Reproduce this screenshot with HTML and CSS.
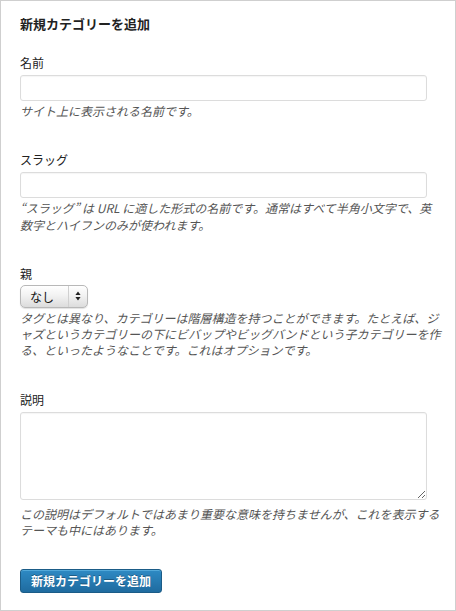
FILE: index.html
```html
<!DOCTYPE html>
<html lang="ja">
<head>
<meta charset="utf-8">
<title>新規カテゴリーを追加</title>
<link rel="stylesheet" href="styles.css">
</head>
<body>
<div class="panel">
  <h3 class="title">新規カテゴリーを追加</h3>

  <div class="field first">
    <label class="label">名前</label>
    <input class="text" type="text">
    <p class="desc">サイト上に表示される名前です。</p>
  </div>

  <div class="field">
    <label class="label">スラッグ</label>
    <input class="text" type="text">
    <p class="desc">“スラッグ” は URL に適した形式の名前です。通常はすべて半角小文字で、英数字とハイフンのみが使われます。</p>
  </div>

  <div class="field">
    <label class="label">親</label>
    <div class="select">
      <span class="select-value">なし</span>
      <span class="select-arrow">
        <svg width="6" height="10" viewBox="0 0 6 10"><path d="M3 0.5L5.6 4H0.4z M3 9.5L5.6 6H0.4z" fill="#222"/></svg>
      </span>
    </div>
    <p class="desc">タグとは異なり、カテゴリーは階層構造を持つことができます。たとえば、ジャズというカテゴリーの下にビバップやビッグバンドという子カテゴリーを作る、といったようなことです。これはオプションです。</p>
  </div>

  <div class="field">
    <label class="label">説明</label>
    <textarea class="area"></textarea>
    <p class="desc desc-area">この説明はデフォルトではあまり重要な意味を持ちませんが、これを表示するテーマも中にはあります。</p>
  </div>

  <button class="submit" type="button">新規カテゴリーを追加</button>
</div>
</body>
</html>
```

FILE: styles.css
```css
html, body {
  margin: 0;
  padding: 0;
  background: #fff;
}

.panel {
  box-sizing: border-box;
  width: 456px;
  height: 611px;
  border: 1px solid #cfcfcf;
  padding: 15px 7px 0 19px;
  font-family: "Noto Sans CJK JP", "Liberation Sans", sans-serif;
  color: #222;
}

.title {
  margin: 0;
  font-size: 13px;
  line-height: 16px;
  font-weight: bold;
  color: #222;
}

.field {
  margin-top: 33px;
}

.field.first {
  margin-top: 23px;
}

.label {
  display: block;
  font-size: 12px;
  line-height: 16px;
  color: #222;
}

.text {
  display: block;
  box-sizing: border-box;
  width: 95%;
  height: 26px;
  margin: 4px 0 0 0;
  border: 1px solid #dcdcdc;
  border-radius: 3px;
  box-shadow: inset 0 1px 1px rgba(0,0,0,0.04);
  background: #fff;
  padding: 3px 5px;
  font-size: 12px;
  outline: none;
}

.desc {
  max-width: 422px;
  margin: 2px 0 0 0;
  font-size: 12px;
  line-height: 16.3px;
  font-style: italic;
  color: #555;
}

.select {
  box-sizing: border-box;
  width: 68px;
  height: 23px;
  margin-top: 3px;
  display: flex;
  align-items: stretch;
  border: 1px solid #b8b8b8;
  border-radius: 5px;
  background: linear-gradient(#ffffff, #f2f2f2 45%, #dcdcdc);
  box-shadow: 0 1px 1px rgba(0,0,0,0.12);
}

.select-value {
  flex: 1;
  display: flex;
  align-items: center;
  padding-left: 9px;
  font-size: 12px;
  color: #111;
  border-right: 1px solid #d0d0d0;
}

.select-arrow {
  width: 18px;
  display: flex;
  align-items: center;
  justify-content: center;
}

.area {
  display: block;
  box-sizing: border-box;
  width: 95%;
  height: 88px;
  margin: 4px 0 0 0;
  border: 1px solid #dcdcdc;
  border-radius: 3px;
  box-shadow: inset 0 1px 1px rgba(0,0,0,0.04);
  padding: 3px 5px;
  font-size: 12px;
  outline: none;
}

.desc-area {
  margin-top: 6px;
}

.submit {
  display: block;
  margin-top: 31px;
  box-sizing: border-box;
  height: 24px;
  padding: 0 10px;
  border: 1px solid #1b5c87;
  border-radius: 3px;
  background: linear-gradient(#2e8ac4, #1f6b9f);
  box-shadow: inset 0 1px 0 rgba(120,200,240,0.5);
  color: #fff;
  font-family: "Noto Sans CJK JP", "Liberation Sans", sans-serif;
  font-size: 12px;
  font-weight: bold;
  line-height: 22px;
  text-shadow: 0 -1px 0 rgba(0,0,0,0.3);
}
```
